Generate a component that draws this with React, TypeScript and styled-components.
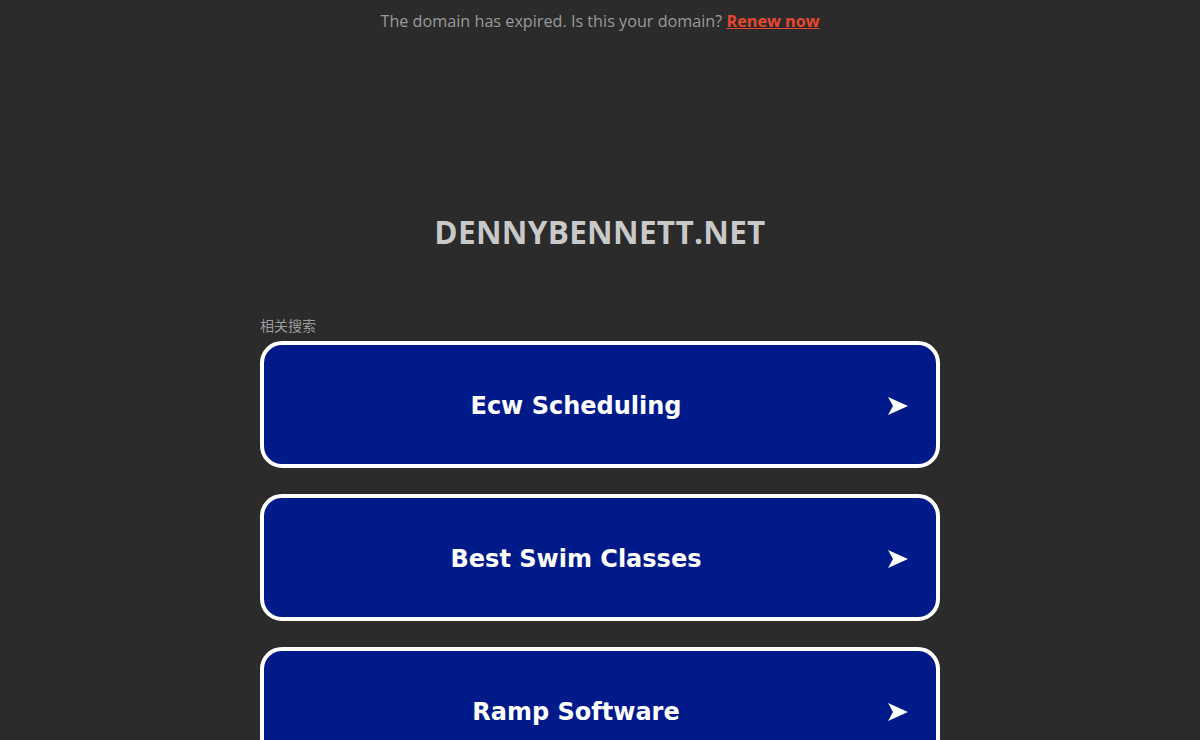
import styled, { createGlobalStyle } from "styled-components";

const GlobalStyle = createGlobalStyle`
  html, body {
    margin: 0;
    padding: 0;
    background: #2b2b2b;
  }
  body {
    font-family: "Open Sans", "Noto Sans", sans-serif;
  }
`;

const searches = ["Ecw Scheduling", "Best Swim Classes", "Ramp Software"];

export default function App() {
  return (
    <>
      <GlobalStyle />
      <Page>
        <Banner>
          The domain has expired. Is this your domain?{" "}
          <RenewLink href="#">Renew now</RenewLink>
        </Banner>
        <DomainTitle>DENNYBENNETT.NET</DomainTitle>
        <Results>
          <ResultsLabel>相关搜索</ResultsLabel>
          {searches.map((term) => (
            <SearchButton key={term} href="#">
              <ButtonText>{term}</ButtonText>
              <Arrow viewBox="0 0 20 18">
                <polygon points="0,0 20,9 0,18 5,9" fill="#fff" />
              </Arrow>
            </SearchButton>
          ))}
        </Results>
      </Page>
    </>
  );
}

const Page = styled.div`
  width: 1200px;
  height: 740px;
  overflow: hidden;
  display: flex;
  flex-direction: column;
  align-items: center;
`;

const Banner = styled.div`
  margin-top: 9px;
  font-size: 16.2px;
  line-height: 24px;
  color: #9a9a9a;
  text-align: center;
`;

const RenewLink = styled.a`
  color: #e8472f;
  font-weight: 700;
  text-decoration: underline;
`;

const DomainTitle = styled.h1`
  margin: 179px 0 0;
  font-size: 31.5px;
  line-height: 40px;
  font-weight: 700;
  color: #c9c9c9;
  letter-spacing: 0.3px;
`;

const Results = styled.div`
  width: 680px;
  margin-top: 66px;
  display: flex;
  flex-direction: column;
  gap: 26px;
`;

const ResultsLabel = styled.div`
  font-family: "Open Sans", "Noto Sans CJK SC", sans-serif;
  font-size: 14px;
  line-height: 16px;
  color: #9a9a9a;
  margin-bottom: -19px;
`;

const SearchButton = styled.a`
  box-sizing: border-box;
  height: 127px;
  display: flex;
  align-items: center;
  background: #011a8a;
  border: 4px solid #fff;
  border-radius: 22px;
  text-decoration: none;
  padding: 2px 28px 0 0;
`;

const ButtonText = styled.span`
  flex: 1;
  text-align: center;
  font-family: "DejaVu Sans", Verdana, sans-serif;
  font-weight: 700;
  font-size: 24px;
  color: #fff;
`;

const Arrow = styled.svg`
  width: 20px;
  height: 18px;
  flex-shrink: 0;
`;
